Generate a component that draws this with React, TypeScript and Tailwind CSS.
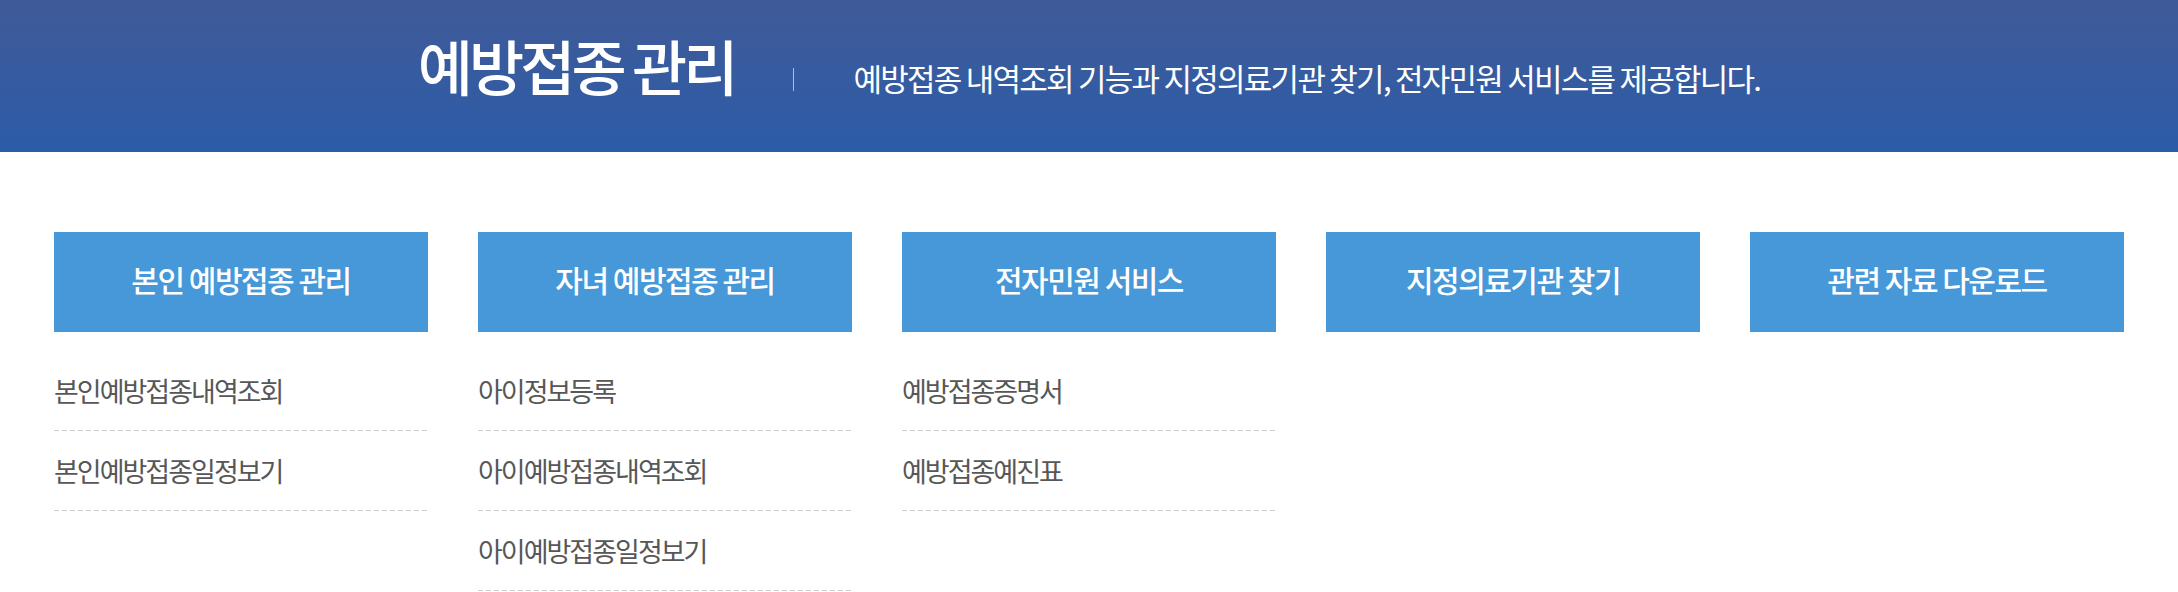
import React from 'react';

interface MenuGroup {
  title: string;
  items: string[];
}

const groups: MenuGroup[] = [
  { title: '본인 예방접종 관리', items: ['본인예방접종내역조회', '본인예방접종일정보기'] },
  { title: '자녀 예방접종 관리', items: ['아이정보등록', '아이예방접종내역조회', '아이예방접종일정보기'] },
  { title: '전자민원 서비스', items: ['예방접종증명서', '예방접종예진표'] },
  { title: '지정의료기관 찾기', items: [] },
  { title: '관련 자료 다운로드', items: [] },
];

const PageHeader = () => (
  <div className="h-[152px] pt-[35px] bg-linear-to-b from-[#3f5a98] to-[#2b5ca8]">
    <div className="flex items-baseline justify-center">
      <h1 className="text-[60px] leading-none font-medium tracking-[-4px] text-white">예방접종 관리</h1>
      <span className="block w-px h-[23px] mb-[7px] mx-[59px] bg-white/60" />
      <p className="text-[31px] leading-none tracking-[-1.75px] text-white">
        예방접종 내역조회 기능과 지정의료기관 찾기, 전자민원 서비스를 제공합니다.
      </p>
    </div>
  </div>
);

const MenuColumn = ({ group }: { group: MenuGroup }) => (
  <div className="flex flex-col">
    <div className="h-[100px] pb-[6px] flex items-center justify-center bg-[#4698d8]">
      <span className="text-[30px] leading-none font-medium tracking-[-1.5px] text-white">{group.title}</span>
    </div>
    <ul className="mt-[19px]">
      {group.items.map((item) => (
        <li key={item} className="flex flex-col">
          <div className="h-[79px] flex items-center">
            <span className="text-[27px] leading-none tracking-[-2px] text-[#575757]">{item}</span>
          </div>
          {/* dashed divider */}
          <div className="h-px bg-[repeating-linear-gradient(90deg,#cdcdcd_0_5px,transparent_5px_8px)]" />
        </li>
      ))}
    </ul>
  </div>
);

export default function App() {
  return (
    <div className="min-h-[592px] bg-white font-['Noto_Sans_CJK_KR',sans-serif]">
      <PageHeader />
      <div className="w-[2070px] mx-auto mt-[80px] grid grid-cols-5 gap-x-[50px]">
        {groups.map((g) => (
          <MenuColumn key={g.title} group={g} />
        ))}
      </div>
    </div>
  );
}
